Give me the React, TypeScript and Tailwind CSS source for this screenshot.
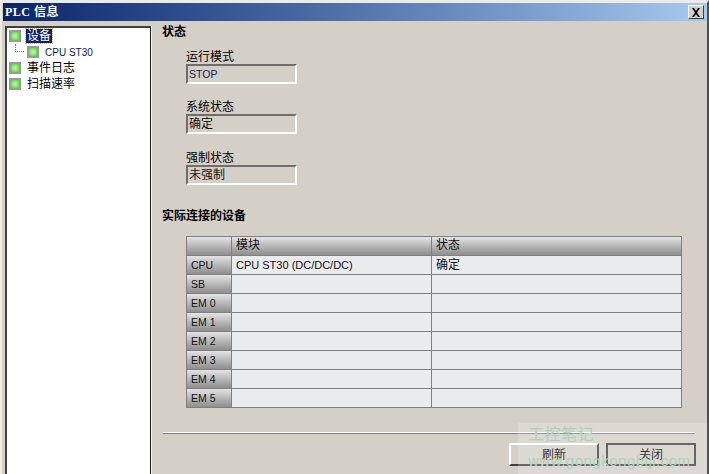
import React from 'react';

const FONT = 'font-["Liberation_Sans","Noto_Sans_CJK_SC",sans-serif]';
const ROWS = [
  { slot: 'CPU', module: 'CPU ST30 (DC/DC/DC)', status: '确定' },
  { slot: 'SB', module: '', status: '' },
  { slot: 'EM 0', module: '', status: '' },
  { slot: 'EM 1', module: '', status: '' },
  { slot: 'EM 2', module: '', status: '' },
  { slot: 'EM 3', module: '', status: '' },
  { slot: 'EM 4', module: '', status: '' },
  { slot: 'EM 5', module: '', status: '' },
];

const StatusIcon = () => (
  <span className="w-[12px] h-[12px] shrink-0 border-2 border-[#9a9a9a] bg-radial from-[#c4f8a8] to-[#30d818]" />
);

const Field = ({ label, value, valueClass, className }: { label: string; value: string; valueClass: string; className?: string }) => (
  <div className={`flex flex-col ${className ?? ''}`}>
    <span className="text-[12px] leading-[14px] text-black">{label}</span>
    <div className={`w-[111px] h-[20px] border-2 border-t-[#6e6e6e] border-l-[#6e6e6e] border-r-white border-b-white border-solid bg-[#d4d0c8] pl-[1px] leading-[16px] ${valueClass}`}>
      {value}
    </div>
  </div>
);

const App: React.FC = () => {
  return (
    <div className={`relative w-[709px] h-[474px] overflow-hidden flex flex-col bg-[#d4d0c8] border-t-[3px] border-t-[#ecebe6] border-l-2 border-l-[#ecebe6] border-r-2 border-r-[#505050] ${FONT}`}>
      <div className="h-[18px] shrink-0 ml-[1px] flex items-center justify-between pl-[2px] pr-[3px] bg-gradient-to-r from-[#0a246a] to-[#a6caf0]">
        <span className="text-[12px] font-bold text-white tracking-[0.5px] font-['Liberation_Serif','Noto_Sans_CJK_SC',serif]">PLC 信息</span>
        <button className="w-[16px] h-[14px] flex items-center justify-center bg-[#d4d0c8] border border-t-white border-l-white border-r-[#404040] border-b-[#404040]">
          <svg width="10" height="9" viewBox="0 0 10 9">
            <path d="M1 0h2l2 3 2-3h2L6 4.500 9 9H7L5 6 3 9H1l3-4.500z" fill="#000" />
          </svg>
        </button>
      </div>

      <div className="flex-1 flex min-h-0 pt-[5px]">
        <div className="w-[147px] ml-[3px] shrink-0 border-r border-[#f4f3ee]">
          <div className="h-full bg-white border-t-2 border-l-2 border-r border-t-[#404040] border-l-[#404040] border-r-[#202020] pl-[2px] text-[12px] text-black">
            <div className="h-[16px] flex items-center gap-[5px]">
              <StatusIcon />
              <span className="bg-[#0a246a] text-white leading-[14px] px-[1px] outline-1 outline-dotted outline-[#e0c060]">设备</span>
            </div>
            <div className="h-[16px] flex items-center">
              <span className="w-[9px] ml-[6px] mr-[3px] h-[8px] -mt-[8px] border-l border-b border-dotted border-[#808080]" />
              <StatusIcon />
              <span className="ml-[6px] text-[10px] text-[#0a1a50]">CPU ST30</span>
            </div>
            <div className="h-[16px] flex items-center gap-[6px]">
              <StatusIcon />
              <span>事件日志</span>
            </div>
            <div className="h-[16px] flex items-center gap-[6px]">
              <StatusIcon />
              <span>扫描速率</span>
            </div>
          </div>
        </div>

        <div className="flex-1 min-w-0 pl-[10px] flex flex-col text-black">
          <div className="text-[12px] font-bold leading-[14px] -mt-[1px]">状态</div>
          <div className="flex flex-col gap-[16px] ml-[24px] mt-[11px]">
            <Field label="运行模式" value="STOP" valueClass="text-[10.5px] text-[#0a1a50]" />
            <Field label="系统状态" value="确定" valueClass="text-[12px] text-[#111]" />
            <Field label="强制状态" value="未强制" valueClass="text-[12px] text-[#111]" className="mt-[1px]" />
          </div>
          <div className="text-[12px] font-bold leading-[14px] mt-[24px]">实际连接的设备</div>

          <div className="ml-[24px] mt-[13px] w-[496px] border border-[#808080] bg-[#eaebed] text-[12px] text-[#111]">
            <div className="flex h-[18px] leading-[17px] bg-gradient-to-b from-[#e4e4e4] to-[#8e8e8e]">
              <div className="w-[45px] border-r border-[#808080]" />
              <div className="w-[200px] pl-[4px] border-r border-[#808080]">模块</div>
              <div className="flex-1 pl-[4px]">状态</div>
            </div>
            {ROWS.map((row) => (
              <div key={row.slot} className="flex h-[19px] leading-[18px] border-t border-[#808080]">
                <div className="w-[45px] pl-[4px] border-r border-[#808080] bg-gradient-to-b from-[#e4e4e4] to-[#8e8e8e] text-[10.5px]">{row.slot}</div>
                <div className="w-[200px] pl-[4px] border-r border-[#808080] text-[11px]">{row.module}</div>
                <div className="flex-1 pl-[4px]">{row.status}</div>
              </div>
            ))}
          </div>

          <div className="mt-[24px] ml-[1px] w-[532px] h-[2px] bg-[#808080] border-t border-white" />
          <div className="flex gap-[7px] mt-[9px] ml-[347px]">
            <button className="w-[90px] h-[23px] text-[12px] bg-[#d4d0c8] border-2 border-t-white border-l-white border-r-[#404040] border-b-[#404040]">刷新</button>
            <button className="w-[90px] h-[23px] text-[12px] bg-[#d4d0c8] border-2 border-[#404040]">关闭</button>
          </div>
        </div>
      </div>

      <div className="absolute left-[516px] top-[420px] w-[191px] h-[54px] bg-white/20 pointer-events-none pl-[10px] text-[#a8d4b8]">
        <div className="text-[16px] leading-[18px] tracking-[0.5px] mt-[3px]">工控笔记</div>
        <div className="text-[15px] leading-[16px] tracking-[0.5px] mt-[9px] font-['Liberation_Sans',sans-serif]">www.gongkongbiji.com</div>
      </div>
    </div>
  );
};

export default App;
